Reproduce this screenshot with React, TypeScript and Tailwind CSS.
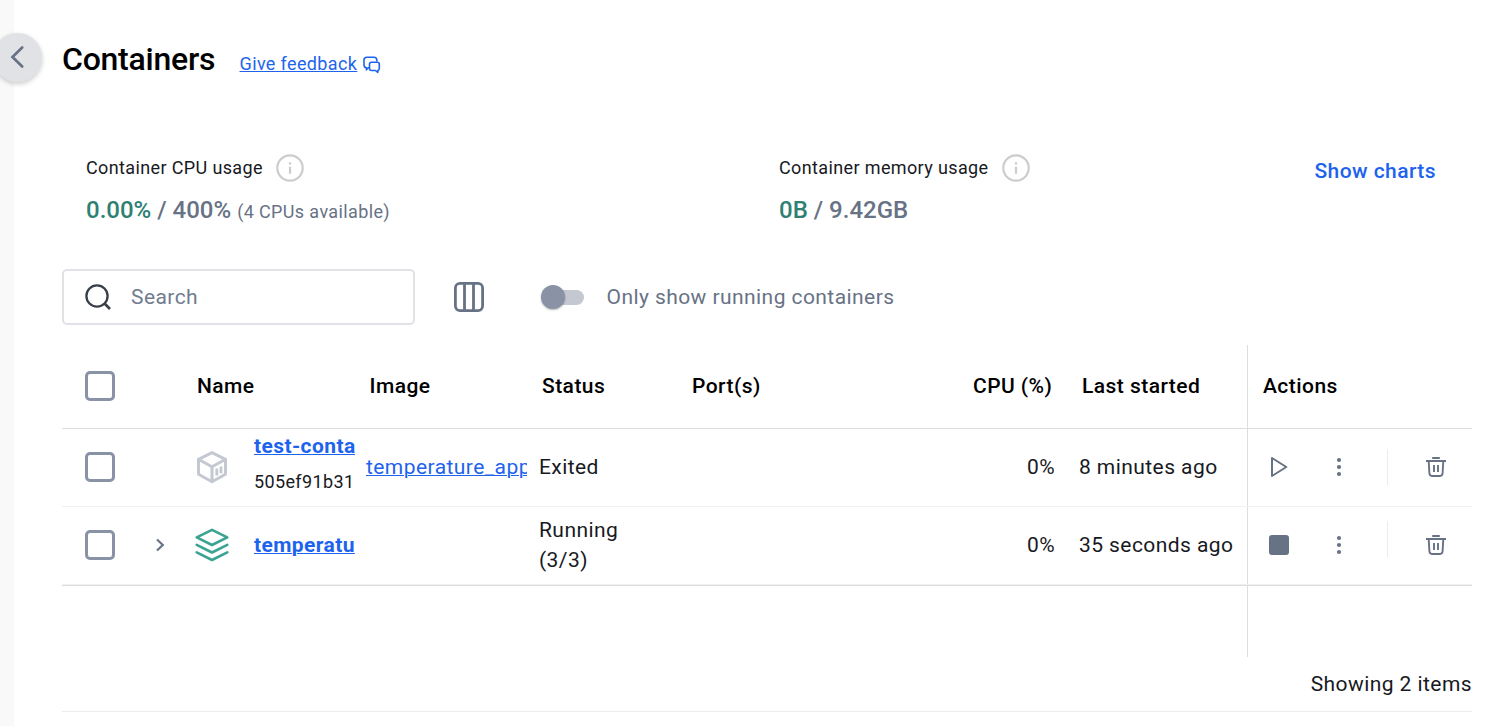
import type { ReactNode } from "react";

function InfoIcon() {
  return (
    <svg className="size-7 shrink-0 text-[#cccccc]" viewBox="0 0 28 28" fill="none" stroke="currentColor" strokeWidth="2.2">
      <circle cx="14" cy="14" r="12.700" />
      <path d="M14 12.800v7M14 8.200v2.200" />
    </svg>
  );
}

function FeedbackIcon() {
  return (
    <svg className="size-[18px] text-[#1d63ed]" viewBox="0 0 18 18" fill="none" stroke="currentColor" strokeWidth="1.6" strokeLinejoin="round">
      <path d="M6 11.800H5.200L3.400 13.800V11.800C1.800 11.500 1 10.500 1 9V4C1 2.200 2.200 1.200 4 1.200H11C12.800 1.200 13.800 2.200 13.800 4V5.600" />
      <path d="M8.500 6.200H14.300C15.500 6.200 16.300 7 16.300 8.200V12.500C16.300 13.700 15.700 14.300 14.800 14.500V16.500L12.500 14.500H8.500C7.300 14.500 6.500 13.700 6.500 12.500V8.200C6.500 7 7.300 6.200 8.500 6.200Z" />
    </svg>
  );
}

function ContainerIcon() {
  return (
    <svg className="size-9 text-[#c4c8d1]" viewBox="0 0 36 36" fill="none" stroke="currentColor" strokeWidth="3" strokeLinejoin="round" strokeLinecap="round">
      <path d="M18 3.700L31.500 10.300V25.300L18 32.700L4.500 25.300V10.300Z" />
      <path d="M4.700 10.500L18 17.800L31.300 10.500M18 17.800V32" />
      <path d="M22.800 19.500V26.500M27 17.500V24.200" strokeWidth="2.800" strokeLinecap="butt" />
    </svg>
  );
}

function StackIcon() {
  return (
    <svg className="size-9 text-[#3aa392]" viewBox="0 0 36 36" fill="none" stroke="currentColor" strokeWidth="2.600" strokeLinejoin="round" strokeLinecap="round">
      <path d="M18 2.800L33.300 10.400L18 18L2.700 10.400Z" />
      <path d="M2.700 17.900L18 25.500L33.300 17.900" />
      <path d="M2.700 25.300L18 33L33.300 25.300" />
    </svg>
  );
}

function TrashIcon() {
  return (
    <svg className="size-5 text-[#677285]" viewBox="0 0 20 20" fill="none" stroke="currentColor" strokeWidth="2">
      <path d="M6.200 1H13.800M0 4H20" />
      <path d="M2.700 4L3.400 16.300C3.500 18 4.300 19 6 19H14C15.700 19 16.500 18 16.600 16.300L17.300 4M8 8V15M12 8V15" strokeWidth="1.900" />
    </svg>
  );
}

function PlayIcon() {
  return (
    <svg className="size-5 text-[#677285]" viewBox="0 0 20 20" fill="none" stroke="currentColor" strokeWidth="2" strokeLinejoin="round">
      <path d="M3 1L17.300 10L3 19Z" />
    </svg>
  );
}

function DotsIcon() {
  return (
    <svg className="size-5 text-[#677285]" viewBox="0 0 20 20" fill="currentColor">
      <circle cx="10" cy="3" r="2.100" />
      <circle cx="10" cy="10" r="2.100" />
      <circle cx="10" cy="17" r="2.100" />
    </svg>
  );
}

function Checkbox() {
  return <div className="size-[30px] rounded-[5px] border-[3px] border-[#8993a5]" />;
}

function Usage({ label, used, total, note }: { label: string; used: string; total: string; note?: string }) {
  return (
    <div className="w-[693px]">
      <div className="flex h-7 items-center gap-[13.500px]">
        <span className="pb-[2px] text-[18px] tracking-[0.37px]">{label}</span>
        <InfoIcon />
      </div>
      <div className="mt-[13px] flex h-[30px] items-baseline gap-[6px] text-[24px] leading-[30px] font-medium whitespace-pre text-[#677285]">
        <span>
          <span className="text-[#2e7f74]">{used}</span> / {total}
        </span>
        {note && <span className="text-[18px] font-normal tracking-[0.37px]">{note}</span>}
      </div>
    </div>
  );
}

interface RowProps {
  icon: ReactNode;
  name: string;
  id?: string;
  image?: string;
  status: ReactNode;
  started: string;
  running?: boolean;
}

function Row({ icon, name, id, image, status, started, running }: RowProps) {
  return (
    <div className="flex h-[78px] border-b border-[#f0f0f2]">
      <div className="flex w-[1185px] items-center pb-px">
        <div className="flex w-[84px] pl-[23px]">
          <Checkbox />
        </div>
        <div className="flex w-[48px] pl-[6px]">
          {running && (
            <svg className="size-4 text-[#677285]" viewBox="0 0 16 16" fill="none" stroke="currentColor" strokeWidth="2.200">
              <path d="M5 2.500L10.800 8L5 13.500" />
            </svg>
          )}
        </div>
        <div className="w-[60px]">{icon}</div>
        <div className="w-[101px] overflow-hidden whitespace-nowrap">
          <div className="text-[21px] leading-[30px] font-bold tracking-[0.4px] text-[#1d63ed] underline decoration-1 underline-offset-1">{name}</div>
          {id && <div className="mt-[6px] pb-[6px] text-[18px] leading-[30px] tracking-[0.37px]">{id}</div>}
        </div>
        <div className="ml-[11px] w-[161px] overflow-hidden text-[21px] leading-[30px] tracking-[0.43px] whitespace-nowrap text-[#1d63ed] underline decoration-1 underline-offset-1">
          {image}
        </div>
        <div className="ml-[12px] w-[150px] text-[21px] leading-[30px] tracking-[0.43px]">{status}</div>
        <div className="w-[366px] text-right text-[21px] leading-[30px] tracking-[0.43px]">0%</div>
        <div className="ml-[24px] text-[21px] leading-[30px] tracking-[0.43px] whitespace-nowrap">{started}</div>
      </div>
      <div className="flex flex-1 items-center border-l border-[#dddddd] pb-px pl-[21px]">
        {running ? <div className="size-5 rounded-[3px] bg-[#677285]" /> : <PlayIcon />}
        <div className="ml-[40px]">
          <DotsIcon />
        </div>
        <div className={running ? "mb-3 ml-[38px] h-9 w-px bg-[#ececee]" : "ml-[38px] h-9 w-px bg-[#ececee]"} />
        <div className="ml-[38px]">
          <TrashIcon />
        </div>
      </div>
    </div>
  );
}

export default function App() {
  return (
    <div className="relative flex h-[726px] w-[1503px] overflow-hidden bg-white font-[Roboto,sans-serif] text-[#17191e]">
      <div className="w-[14px] bg-[#f9f9f9]" />
      <button className="absolute top-[33px] left-[-7px] flex size-[49px] items-center justify-center rounded-full bg-[#e1e2e6] pb-px shadow-[0_2px_5px_rgba(0,0,0,0.2)]">
        <svg className="size-6 text-[#677285]" viewBox="0 0 24 24" fill="none" stroke="currentColor" strokeWidth="2.700" strokeLinecap="round">
          <path d="M16.200 2.500L6.500 12L16.200 21.500" />
        </svg>
      </button>
      <main className="ml-[48px] w-[1410px]">
        <header className="flex h-[40px] items-baseline pt-[39px] leading-[40px]">
          <h1 className="w-[177.500px] text-[32px] font-medium tracking-[-0.25px] text-black">Containers</h1>
          <a className="text-[18px] tracking-[0.37px] text-[#1d63ed] underline decoration-1 underline-offset-1">Give feedback</a>
          <span className="ml-[6px] translate-y-[4px]">
            <FeedbackIcon />
          </span>
        </header>

        <section className="mt-[114px] flex h-[72px] pl-6">
          <Usage label="Container CPU usage" used="0.00%" total="400%" note="(4 CPUs available)" />
          <Usage label="Container memory usage" used="0B" total="9.42GB" />
        </section>
        <div className="-mt-[70px] flex h-[70px] justify-end pr-[36px]">
          <button className="h-[32px] text-[21px] font-medium tracking-[0.43px] text-[#1d63ed]">Show charts</button>
        </div>

        <div className="mt-[43px] flex h-14 items-center">
          <div className="flex h-14 w-[353px] items-center rounded-[5px] border-2 border-[#e1e2e6] pl-[20px]">
            <svg className="size-7 text-[#393f49]" viewBox="0 0 28 28" fill="none" stroke="currentColor" strokeWidth="2.300">
              <circle cx="13" cy="13" r="10.600" />
              <path d="M20.500 20.500L26 26" strokeWidth="2.700" />
            </svg>
            <span className="ml-[19px] text-[21px] leading-[30px] tracking-[0.43px] text-[#717c8e]">Search</span>
          </div>
          <svg className="ml-[39px] size-[30px] text-[#677285]" viewBox="0 0 30 30" fill="none" stroke="currentColor" strokeWidth="2.800">
            <rect x="1.400" y="1.400" width="27.200" height="27.200" rx="4.500" />
            <path d="M10.500 1V29M19.500 1V29" />
          </svg>
          <div className="ml-[57px] flex h-6 w-[43px] items-center">
            <div className="z-10 size-6 shrink-0 rounded-full bg-[#8993a5] shadow-[0_1px_2px_rgba(0,0,0,0.3)]" />
            <div className="-ml-[18px] h-[15px] w-[37px] shrink-0 rounded-full bg-[#c4c8d1]" />
          </div>
          <span className="ml-[22.500px] text-[21px] leading-[30px] tracking-[0.43px] text-[#677285]">Only show running containers</span>
        </div>

        <div className="mt-5">
          <div className="flex h-[84px] border-b border-[#dddddd] text-[21px] leading-[30px] font-medium tracking-[0.45px] text-black">
            <div className="flex w-[1185px] items-center pb-px">
              <div className="w-[135px] pl-[23px]">
                <Checkbox />
              </div>
              <div className="w-[172.500px]">Name</div>
              <div className="w-[172.500px]">Image</div>
              <div className="w-[150px]">Status</div>
              <div className="w-[281px]">Port(s)</div>
              <div className="w-[109px]">CPU (%)</div>
              <div>Last started</div>
            </div>
            <div className="flex flex-1 items-center border-l border-[#dddddd] pb-px pl-[15px]">Actions</div>
          </div>
          <Row icon={<ContainerIcon />} name="test-conta" id="505ef91b31" image="temperature_app" status="Exited" started="8 minutes ago" />
          <Row
            icon={<StackIcon />}
            name="temperatu"
            status={
              <>
                Running
                <br />
                (3/3)
              </>
            }
            started="35 seconds ago"
            running
          />
          <div className="flex h-[72px] border-t border-[#dddddd]">
            <div className="w-[1185px]" />
            <div className="flex-1 border-l border-[#dddddd]" />
          </div>
        </div>
        <footer className="flex h-[55px] items-center justify-end border-b border-[#ececee] text-[21px] leading-[30px] tracking-[0.43px]">Showing 2 items</footer>
      </main>
    </div>
  );
}
